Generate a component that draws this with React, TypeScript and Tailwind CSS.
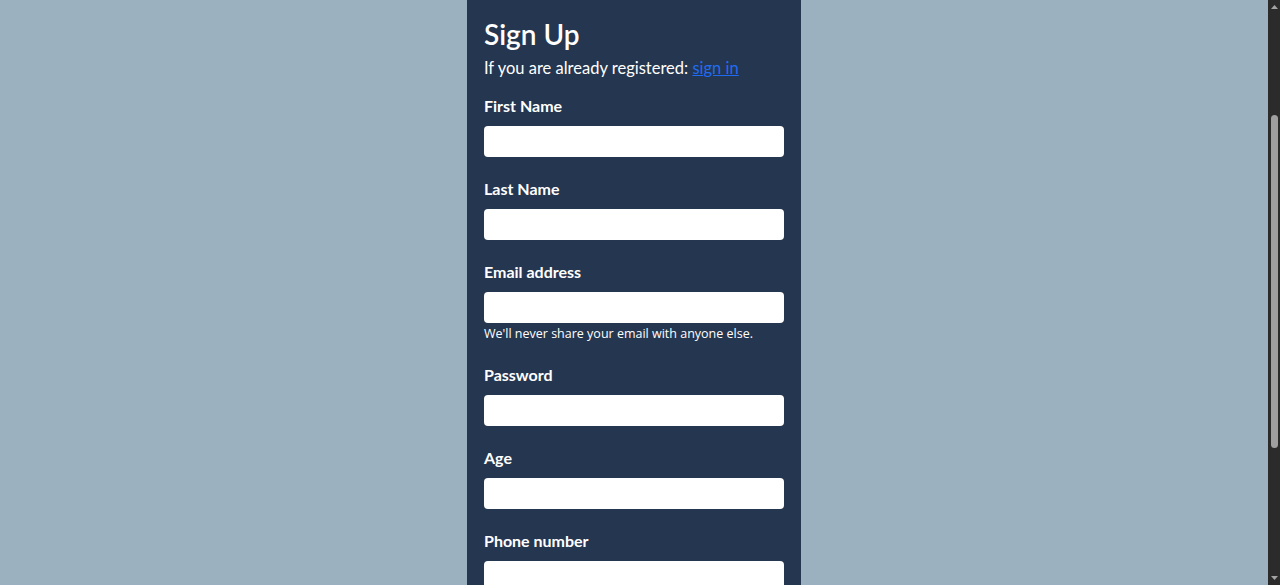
import { useLayoutEffect, useRef } from "react";

const fields = [
  { id: "firstName", label: "First Name", type: "text" },
  { id: "lastName", label: "Last Name", type: "text" },
  { id: "email", label: "Email address", type: "email", help: "We'll never share your email with anyone else." },
  { id: "password", label: "Password", type: "password" },
  { id: "age", label: "Age", type: "number" },
  { id: "phone", label: "Phone number", type: "tel" },
  { id: "city", label: "City", type: "text" },
];

// browser scrollbar as it shows in the dark theme
const Scrollbar = () => (
  <div className="flex w-[12px] shrink-0 flex-col items-center justify-between bg-[#2b2b2b] py-[5px]">
    <svg width="7" height="4" viewBox="0 0 7 4">
      <path d="M3.5 0L7 4H0z" fill="#a3a3a3" />
    </svg>
    <div className="flex flex-1 w-full justify-center pt-[106px] pb-[128px]">
      <div className="w-[7px] rounded-full bg-[#9f9f9f]" />
    </div>
    <svg width="7" height="4" viewBox="0 0 7 4">
      <path d="M0 0h7L3.5 4z" fill="#a3a3a3" />
    </svg>
  </div>
);

export default function App() {
  const scroller = useRef<HTMLDivElement>(null);

  useLayoutEffect(() => {
    if (scroller.current) scroller.current.scrollTop = 185;
  }, []);

  return (
    <div className="flex h-screen bg-[#9cb1bf] font-['Lato','Noto_Sans',sans-serif]">
      <div ref={scroller} className="flex-1 overflow-y-auto">
        <div className="mx-auto w-[334px] bg-[#253650] px-[17px] pt-[202px] pb-10 text-white">
          <h2 className="text-[28px] leading-[34px] font-semibold">Sign Up</h2>
          <p className="mt-[4px] text-[16.5px] leading-[27px]">
            If you are already registered:{" "}
            <a href="#" className="text-[#1f6cf2] underline">
              sign in
            </a>
          </p>

          <form className="mt-[11px]">
            {fields.map((f) => (
              <div key={f.id} className="mb-[19px]">
                <label htmlFor={f.id} className="mb-[9px] block pt-[1px] text-[16px] leading-[23px] font-bold">
                  {f.label}
                </label>
                <input
                  id={f.id}
                  type={f.type}
                  className="block h-[31px] w-full rounded-[4px] bg-white px-3 text-black focus:outline-none"
                />
                {f.help && (
                  <div className="pt-[2px] text-[12.5px] leading-[18px] font-['Open_Sans',sans-serif]">{f.help}</div>
                )}
              </div>
            ))}
            <button
              type="submit"
              className="mt-2 rounded-[4px] bg-[#1f6cf2] px-4 py-2 font-bold text-white"
            >
              Sign Up
            </button>
          </form>
        </div>
      </div>
      <Scrollbar />
    </div>
  );
}
